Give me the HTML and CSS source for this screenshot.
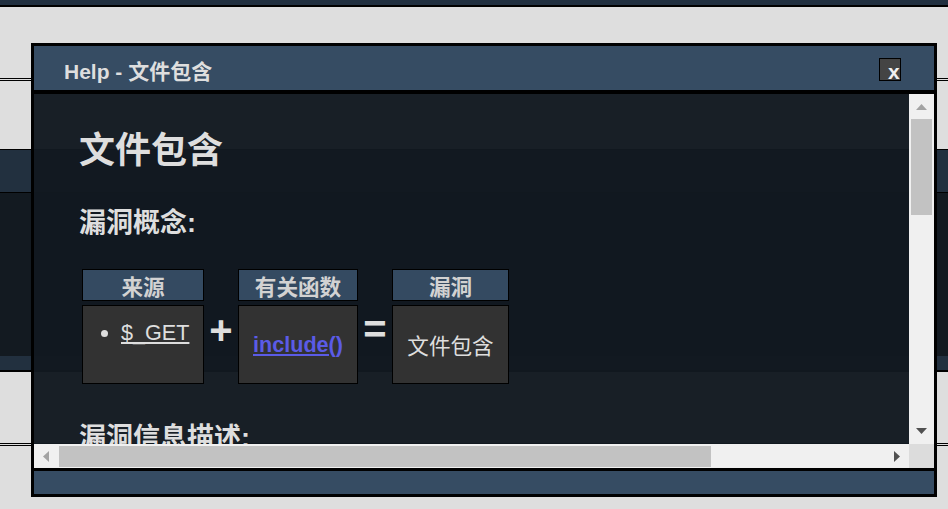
FILE: index.html
```html
<!DOCTYPE html>
<html lang="zh">
<head>
<meta charset="utf-8">
<title>Help - 文件包含</title>
<link rel="stylesheet" href="styles.css">
</head>
<body>
<div class="page">
  <div class="topbar"></div>
  <div class="rule rule-top"></div>
  <div class="band">
    <div class="band-head"></div>
    <div class="band-body"></div>
    <div class="band-foot"></div>
  </div>
  <div class="rule rule-bottom"></div>
</div>

<div class="modal">
  <div class="modal-header">
    <span class="modal-title">Help - 文件包含</span>
    <div class="close">x</div>
  </div>
  <div class="modal-body">
    <div class="viewport">
      <div class="content">
        <h1 class="title">文件包含</h1>
        <h2 class="subtitle">漏洞概念:</h2>
        <div class="flow">
          <div class="cell-head c1">来源</div>
          <div class="cell-head c3">有关函数</div>
          <div class="cell-head c5">漏洞</div>
          <div class="cell-body c1 cell-src">
            <ul class="src-list"><li><a class="src-link" href="#">$_GET</a></li></ul>
          </div>
          <div class="op c2">+</div>
          <div class="cell-body c3"><a class="func-link" href="#">include()</a></div>
          <div class="op op-eq c4">=</div>
          <div class="cell-body c5">文件包含</div>
        </div>
        <h2 class="subtitle">漏洞信息描述:</h2>
      </div>
    </div>
    <div class="vscroll">
      <svg class="arrow arrow-up" width="11" height="6" viewBox="0 0 11 6"><polygon points="5.5,0 11,6 0,6" fill="#a3a3a3"/></svg>
      <div class="vthumb"></div>
      <div class="spacer"></div>
      <svg class="arrow arrow-down" width="11" height="6" viewBox="0 0 11 6"><polygon points="0,0 11,0 5.5,6" fill="#505050"/></svg>
    </div>
    <div class="hscroll">
      <svg class="arrow arrow-left" width="6" height="11" viewBox="0 0 6 11"><polygon points="6,0 6,11 0,5.5" fill="#a3a3a3"/></svg>
      <div class="hthumb"></div>
      <div class="spacer"></div>
      <svg class="arrow arrow-right" width="6" height="11" viewBox="0 0 6 11"><polygon points="0,0 6,5.5 0,11" fill="#505050"/></svg>
    </div>
    <div class="corner"></div>
  </div>
  <div class="modal-footer"></div>
</div>
</body>
</html>
```
FILE: styles.css
```css
html, body {
  margin: 0;
  padding: 0;
  background: #dedede;
  font-family: "Liberation Sans", "Noto Sans CJK SC", sans-serif;
}

/* background page */
.topbar {
  height: 5px;
  background: #213040;
  border-bottom: 2px solid #000;
}
.rule {
  border-top: 3px double #000;
}
.rule-top { margin-top: 71px; }
.band { margin-top: 68px; }
.band-head {
  height: 42px;
  background: #22303f;
  border-top: 1px solid #000;
  border-bottom: 1px solid #000;
}
.band-body {
  height: 163px;
  background: #131a21;
}
.band-foot {
  height: 14px;
  background: #22303f;
  border-bottom: 2px solid #000;
}
.rule-bottom { margin-top: 71px; }

/* modal */
.modal {
  position: absolute;
  left: 31px;
  top: 43px;
  width: 900px;
  border: 3px solid #000;
  display: flex;
  flex-direction: column;
}
.modal-header {
  box-sizing: border-box;
  height: 48px;
  background: #364c63;
  border-bottom: 4px solid #000;
  display: flex;
  justify-content: space-between;
  align-items: flex-start;
  padding: 12px 33px 0 30px;
}
.modal-title {
  margin-top: 2px;
  font-weight: bold;
  font-size: 21px;
  line-height: 24px;
  color: #dedede;
}
.close {
  width: 22px;
  height: 23px;
  box-sizing: border-box;
  border: 1px solid #000;
  background: #444;
  color: #f0f0f0;
  font-weight: bold;
  font-size: 21px;
  line-height: 21px;
  padding: 2px 0 0 8px;
  overflow: visible;
}

.modal-body {
  display: grid;
  grid-template-columns: 875px 25px;
  grid-template-rows: 350px 24px;
}
.viewport {
  overflow: hidden;
  background: rgba(18, 25, 32, 0.97);
}
.content {
  width: 1107px;
  padding: 37px 0 0 45px;
  color: #dedede;
}
.title {
  margin: 0 0 36px;
  font-size: 36px;
  line-height: 40px;
  font-weight: bold;
}
.subtitle {
  margin: 0;
  font-size: 27px;
  line-height: 32px;
  font-weight: bold;
}

.flow {
  display: grid;
  grid-template-columns: 122px 34px 120px 34px 117px;
  grid-template-rows: 32px 79px;
  row-gap: 4px;
  margin: 30px 0 38px 3px;
}
.c1 { grid-column: 1; }
.c2 { grid-column: 2; }
.c3 { grid-column: 3; }
.c4 { grid-column: 4; }
.c5 { grid-column: 5; }
.cell-head {
  grid-row: 1;
  border: 1px solid #000;
  background: #344a61;
  color: #d2d2d2;
  font-weight: bold;
  font-size: 21.6px;
  display: flex;
  align-items: center;
  justify-content: center;
}
.cell-body {
  grid-row: 2;
  border: 1px solid #000;
  background: #323232;
  color: #dedede;
  font-size: 21.6px;
  display: flex;
  align-items: center;
  justify-content: center;
}
.cell-src {
  align-items: flex-start;
  justify-content: flex-start;
  padding-top: 14px;
}
.src-list {
  margin: 0;
  padding-left: 38px;
  list-style: disc;
}
.src-link {
  color: #dedede;
  text-decoration: underline;
}
.func-link {
  color: #5b5be6;
  font-weight: bold;
  text-decoration: underline;
}
.op {
  grid-row: 2;
  display: flex;
  justify-content: center;
  align-items: flex-start;
  padding-top: 2px;
  font-size: 40px;
  line-height: 46px;
  font-weight: bold;
  color: #dedede;
}
.op-eq { padding-top: 1px; }

/* scrollbars */
.vscroll {
  background: #f0f0f0;
  display: flex;
  flex-direction: column;
  align-items: center;
}
.arrow { display: block; flex: none; }
.arrow-up { margin-top: 10px; }
.vthumb {
  width: 21px;
  height: 96px;
  margin-top: 9px;
  background: #c2c2c2;
}
.spacer { flex: 1; }
.arrow-down { margin-bottom: 10px; }

.hscroll {
  background: #f0f0f0;
  display: flex;
  align-items: center;
}
.arrow-left { margin-left: 9px; }
.hthumb {
  width: 652px;
  height: 21px;
  margin-left: 10px;
  align-self: flex-start;
  margin-top: 2px;
  background: #c2c2c2;
}
.arrow-right { margin-right: 9px; }
.corner { background: #dcdcdc; }

.modal-footer {
  height: 23px;
  background: #364c63;
  border-top: 3px solid #000;
}
```
